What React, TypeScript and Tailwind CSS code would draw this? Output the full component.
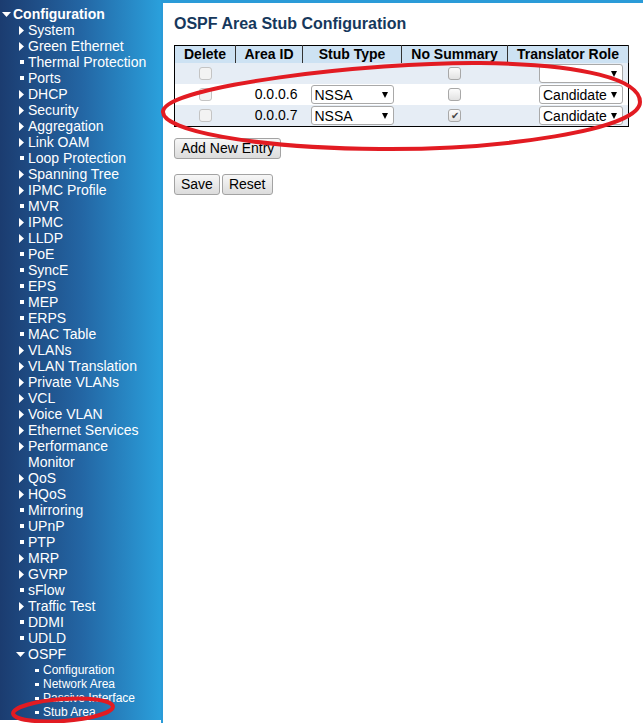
import React from "react";

type Item = { label: string; kind: "tri" | "dot" | "open" };

const items: Item[] = [
  { label: "System", kind: "tri" },
  { label: "Green Ethernet", kind: "tri" },
  { label: "Thermal Protection", kind: "dot" },
  { label: "Ports", kind: "dot" },
  { label: "DHCP", kind: "tri" },
  { label: "Security", kind: "tri" },
  { label: "Aggregation", kind: "tri" },
  { label: "Link OAM", kind: "tri" },
  { label: "Loop Protection", kind: "dot" },
  { label: "Spanning Tree", kind: "tri" },
  { label: "IPMC Profile", kind: "tri" },
  { label: "MVR", kind: "dot" },
  { label: "IPMC", kind: "tri" },
  { label: "LLDP", kind: "tri" },
  { label: "PoE", kind: "dot" },
  { label: "SyncE", kind: "dot" },
  { label: "EPS", kind: "dot" },
  { label: "MEP", kind: "dot" },
  { label: "ERPS", kind: "dot" },
  { label: "MAC Table", kind: "dot" },
  { label: "VLANs", kind: "tri" },
  { label: "VLAN Translation", kind: "tri" },
  { label: "Private VLANs", kind: "tri" },
  { label: "VCL", kind: "tri" },
  { label: "Voice VLAN", kind: "tri" },
  { label: "Ethernet Services", kind: "tri" },
  { label: "Performance Monitor", kind: "tri" },
  { label: "QoS", kind: "tri" },
  { label: "HQoS", kind: "tri" },
  { label: "Mirroring", kind: "dot" },
  { label: "UPnP", kind: "dot" },
  { label: "PTP", kind: "dot" },
  { label: "MRP", kind: "tri" },
  { label: "GVRP", kind: "tri" },
  { label: "sFlow", kind: "dot" },
  { label: "Traffic Test", kind: "tri" },
  { label: "DDMI", kind: "dot" },
  { label: "UDLD", kind: "dot" },
  { label: "OSPF", kind: "open" },
];

const ospfItems = ["Configuration", "Network Area", "Passive Interface", "Stub Area"];

function Marker({ kind }: { kind: Item["kind"] }) {
  if (kind === "tri")
    return (
      <svg width="5" height="9" viewBox="0 0 5 9">
        <path d="M0 0 L5 4.5 L0 9 Z" fill="white" />
      </svg>
    );
  if (kind === "open")
    return (
      <svg width="9" height="5" viewBox="0 0 9 5" className="-ml-[3px]">
        <path d="M0 0 L9 0 L4.5 5 Z" fill="white" />
      </svg>
    );
  return <span className="block w-1 h-1 ml-px bg-white" />;
}

function CheckBox({ checked, dim }: { checked?: boolean; dim?: boolean }) {
  return (
    <span
      className={`inline-flex items-center justify-center w-[13px] h-[13px] rounded-[3px] border align-middle ${
        dim ? "border-[#c4c4c4] bg-[#f3f3f3]" : "border-[#a8a8a8] bg-gradient-to-b from-[#fcfcfc] to-[#e2e2e2]"
      }`}
    >
      {checked && <span className="text-[10px] leading-none text-[#444]">✔</span>}
    </span>
  );
}

function Select({ value, w }: { value: string; w: string }) {
  return (
    <span
      className={`inline-flex items-center justify-between h-[19px] ${w} pl-[3px] pr-[5px] bg-white border border-[#a9a9a9] rounded-[3px] align-middle text-[14px] leading-none text-black`}
    >
      <span>{value}</span>
      <svg width="6" height="6" viewBox="0 0 6 6" className="shrink-0">
        <path d="M0 0 L6 0 L3 6 Z" fill="black" />
      </svg>
    </span>
  );
}

function Btn({ children }: { children: React.ReactNode }) {
  return (
    <button className="h-[21px] px-[6px] text-[14px] leading-none text-black bg-gradient-to-b from-[#f7f7f7] to-[#dcdcdc] border border-[#a3a3a3] rounded-[3px]">
      {children}
    </button>
  );
}

export default function App() {
  return (
    <div
      className="relative w-[643px] h-[723px] overflow-hidden bg-white flex"
      style={{ fontFamily: '"Liberation Sans", Arial, sans-serif' }}
    >
      {/* left navigation */}
      <div className="w-[161px] h-[720px] shrink-0 overflow-hidden bg-gradient-to-r from-[#1b3c70] via-[#2365a3] to-[#2aa0dc] text-white pt-[6px]">
        <div className="flex items-center h-4 pl-[2px]">
          <svg width="9" height="5" viewBox="0 0 9 5">
            <path d="M0 0 L9 0 L4.5 5 Z" fill="white" />
          </svg>
          <span className="ml-[2px] text-[14px] font-bold leading-4">Configuration</span>
        </div>
        {items.map((it) => (
          <div key={it.label} className="flex pl-[19px]">
            <div className="w-[9px] h-4 shrink-0 flex items-center">
              <Marker kind={it.kind} />
            </div>
            <span className="max-w-[126px] text-[14px] leading-4">{it.label}</span>
          </div>
        ))}
        <div className="pt-px">
          {ospfItems.map((s) => (
            <div key={s} className="flex items-center h-[14px] pl-[35px]">
              <span className="block w-[4px] h-[3px] bg-white mr-[4px]" />
              <span className="text-[12px] leading-[14px] whitespace-nowrap">{s}</span>
            </div>
          ))}
        </div>
      </div>

      {/* main frame */}
      <div className="flex-1 border-t-[3px] border-l-2 border-[#2a9bd8] pl-[11px] pt-[12px] text-black">
        <h1 className="text-[16px] font-bold leading-[18px] text-[#16385c]">OSPF Area Stub Configuration</h1>
        <table className="mt-[12px] table-fixed border-collapse border border-black text-[14px]">
          <colgroup>
            <col className="w-[61px]" />
            <col className="w-[67px]" />
            <col className="w-[99px]" />
            <col className="w-[106px]" />
            <col className="w-[121px]" />
          </colgroup>
          <thead>
            <tr className="h-[17px] bg-[#cde2f3]">
              {["Delete", "Area ID", "Stub Type", "No Summary", "Translator Role"].map((h) => (
                <th key={h} className="border-r border-[#333] font-bold leading-[16px] px-0 whitespace-nowrap">
                  {h}
                </th>
              ))}
            </tr>
          </thead>
          <tbody>
            <tr className="h-[21px] bg-[#e6edf5]">
              <td className="text-center"><CheckBox dim /></td>
              <td></td>
              <td></td>
              <td className="text-center"><CheckBox /></td>
              <td className="text-right pr-[5px]"><Select value="" w="w-[84px]" /></td>
            </tr>
            <tr className="h-[21px] bg-white">
              <td className="text-center"><CheckBox dim /></td>
              <td className="text-right pr-[5px]">0.0.0.6</td>
              <td className="text-center"><Select value="NSSA" w="w-[83px]" /></td>
              <td className="text-center"><CheckBox /></td>
              <td className="text-right pr-[5px]"><Select value="Candidate" w="w-[84px]" /></td>
            </tr>
            <tr className="h-[21px] bg-[#e6edf5]">
              <td className="text-center"><CheckBox dim /></td>
              <td className="text-right pr-[5px]">0.0.0.7</td>
              <td className="text-center"><Select value="NSSA" w="w-[83px]" /></td>
              <td className="text-center"><CheckBox checked /></td>
              <td className="text-right pr-[5px]"><Select value="Candidate" w="w-[84px]" /></td>
            </tr>
          </tbody>
        </table>
        <div className="mt-[11px] flex">
          <Btn>Add New Entry</Btn>
        </div>
        <div className="mt-[15px] flex gap-[2px]">
          <Btn>Save</Btn>
          <Btn>Reset</Btn>
        </div>
      </div>

      {/* red annotation marks drawn on the screenshot */}
      <svg className="absolute inset-0 pointer-events-none" width="643" height="723" viewBox="0 0 643 723">
        <path
          d="M 163 112 C 162 86, 370 62, 480 63 C 585 64, 640 80, 640 102 C 640 130, 500 150, 380 149 C 250 148, 163 130, 163 112 Z"
          fill="none"
          stroke="#e21b22"
          strokeWidth="4"
        />
        <ellipse cx="63" cy="710" rx="50" ry="11" fill="none" stroke="#e21b22" strokeWidth="4" transform="rotate(-4 63 710)" />
      </svg>
    </div>
  );
}
